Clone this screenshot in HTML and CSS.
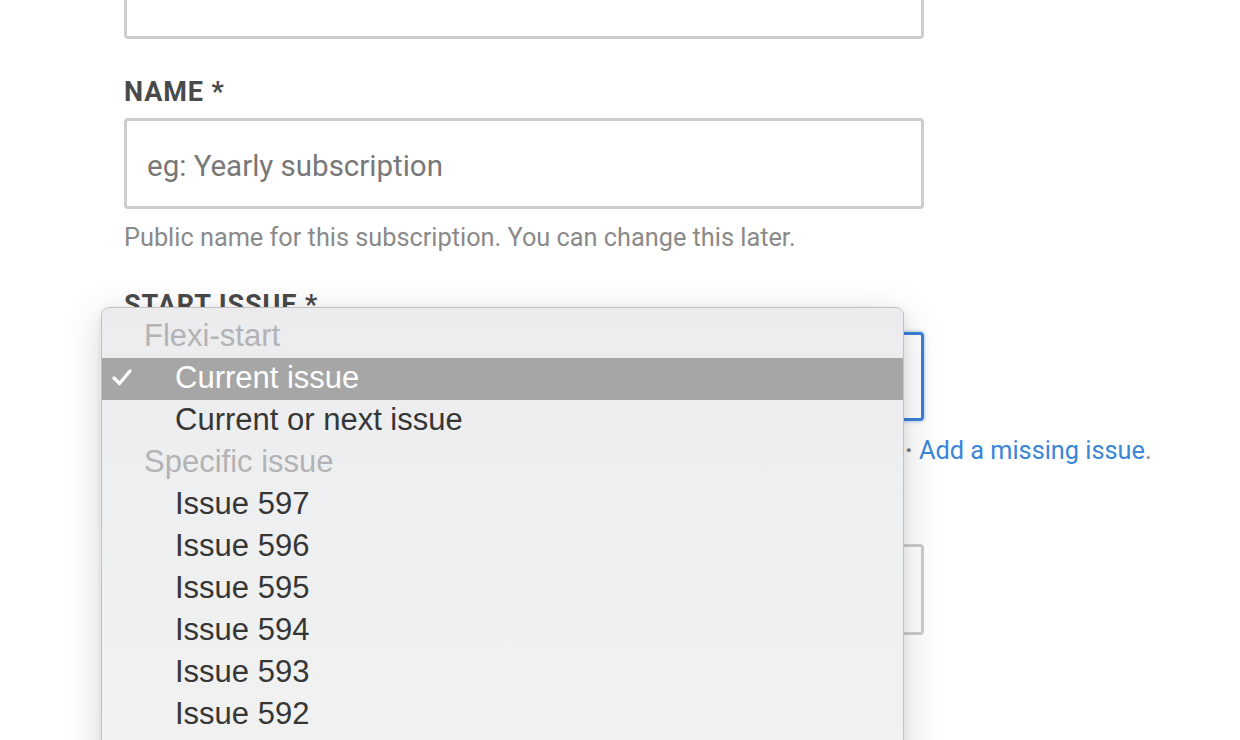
FILE: index.html
```html
<!DOCTYPE html>
<html lang="en">
<head>
<meta charset="utf-8">
<title>New subscription</title>
<link rel="stylesheet" href="styles.css">
</head>
<body>
<div class="form">
  <div class="input input-top"></div>

  <div class="label">NAME *</div>
  <div class="input"><span class="placeholder">eg: Yearly subscription</span></div>
  <div class="help">Public name for this subscription. You can change this later.</div>

  <div class="label label-gap">START ISSUE *</div>
  <div class="input select-focus"></div>
  <div class="help help-select"><span class="sep">·</span> <a class="link" href="#">Add a missing issue</a>.</div>

  <div class="input input-third"></div>
</div>

<div class="dropdown">
  <div class="group">Flexi-start</div>
  <div class="option selected">
    <svg class="check" viewBox="0 0 20 17" width="20" height="17"><polyline points="2,9 7.5,14.5 18,2" fill="none" stroke="#fff" stroke-width="3.2" stroke-linecap="round" stroke-linejoin="round"/></svg>
    Current issue
  </div>
  <div class="option">Current or next issue</div>
  <div class="group">Specific issue</div>
  <div class="option">Issue 597</div>
  <div class="option">Issue 596</div>
  <div class="option">Issue 595</div>
  <div class="option">Issue 594</div>
  <div class="option">Issue 593</div>
  <div class="option">Issue 592</div>
</div>
</body>
</html>
```

FILE: styles.css
```css
html, body {
  margin: 0;
  padding: 0;
  background: #ffffff;
  overflow: hidden;
  height: 740px;
}

body {
  position: relative;
  font-family: Roboto, "Liberation Sans", Arial, sans-serif;
}

.form {
  width: 800px;
  padding-left: 124px;
  display: flex;
  flex-direction: column;
}

.input {
  box-sizing: border-box;
  width: 800px;
  height: 91px;
  border: 3px solid #cdcdcd;
  border-radius: 4px;
  background: #ffffff;
  padding-left: 20px;
  padding-top: 4px;
  display: flex;
  align-items: center;
}

.input-top {
  height: 80px;
  margin-top: -41px;
}

.placeholder {
  font-size: 29.5px;
  color: #787878;
  line-height: 34px;
}

.label {
  font-size: 27px;
  font-weight: 700;
  color: #4a4a4a;
  line-height: 30px;
  letter-spacing: 0.9px;
  margin-top: 38px;
  margin-bottom: 11px;
}

.label-gap {
  margin-top: 38px;
  margin-bottom: 12px;
}

.help {
  font-size: 25.3px;
  line-height: 28px;
  color: #8a8a8a;
  margin-top: 15px;
  white-space: nowrap;
}

.help-select {
  margin-top: 16px;
  padding-left: 781px;
}

.sep {
  color: #808080;
  font-weight: 700;
}

.link {
  color: #3a86d8;
  text-decoration: none;
}

.select-focus {
  height: 89px;
  border-color: #3a80d6;
  box-shadow: 0 0 4px rgba(58, 128, 214, 0.55);
}

.input-third {
  height: 91px;
  margin-top: 79px;
}

.dropdown {
  position: absolute;
  left: 101px;
  top: 307px;
  width: 803px;
  height: 470px;
  box-sizing: border-box;
  padding-top: 8px;
  border: 1px solid #c2c2c2;
  border-radius: 8px;
  background: linear-gradient(180deg, #ececee 0%, #eeeff0 40%, #f1f1f1 100%);
  box-shadow: 0 10px 40px rgba(0, 0, 0, 0.16), 0 2px 8px rgba(0, 0, 0, 0.08);
  font-family: "Liberation Sans", Arial, sans-serif;
  font-size: 31px;
  overflow: hidden;
}

.group,
.option {
  height: 42px;
  box-sizing: border-box;
  line-height: 39px;
  padding-bottom: 3px;
  white-space: nowrap;
}

.group {
  color: #b3b3b5;
  padding-left: 42px;
}

.option {
  color: #363636;
  padding-left: 73px;
  position: relative;
}

.option.selected {
  background: #a6a6a6;
  color: #ffffff;
}

.check {
  position: absolute;
  left: 10px;
  top: 11px;
}
```
